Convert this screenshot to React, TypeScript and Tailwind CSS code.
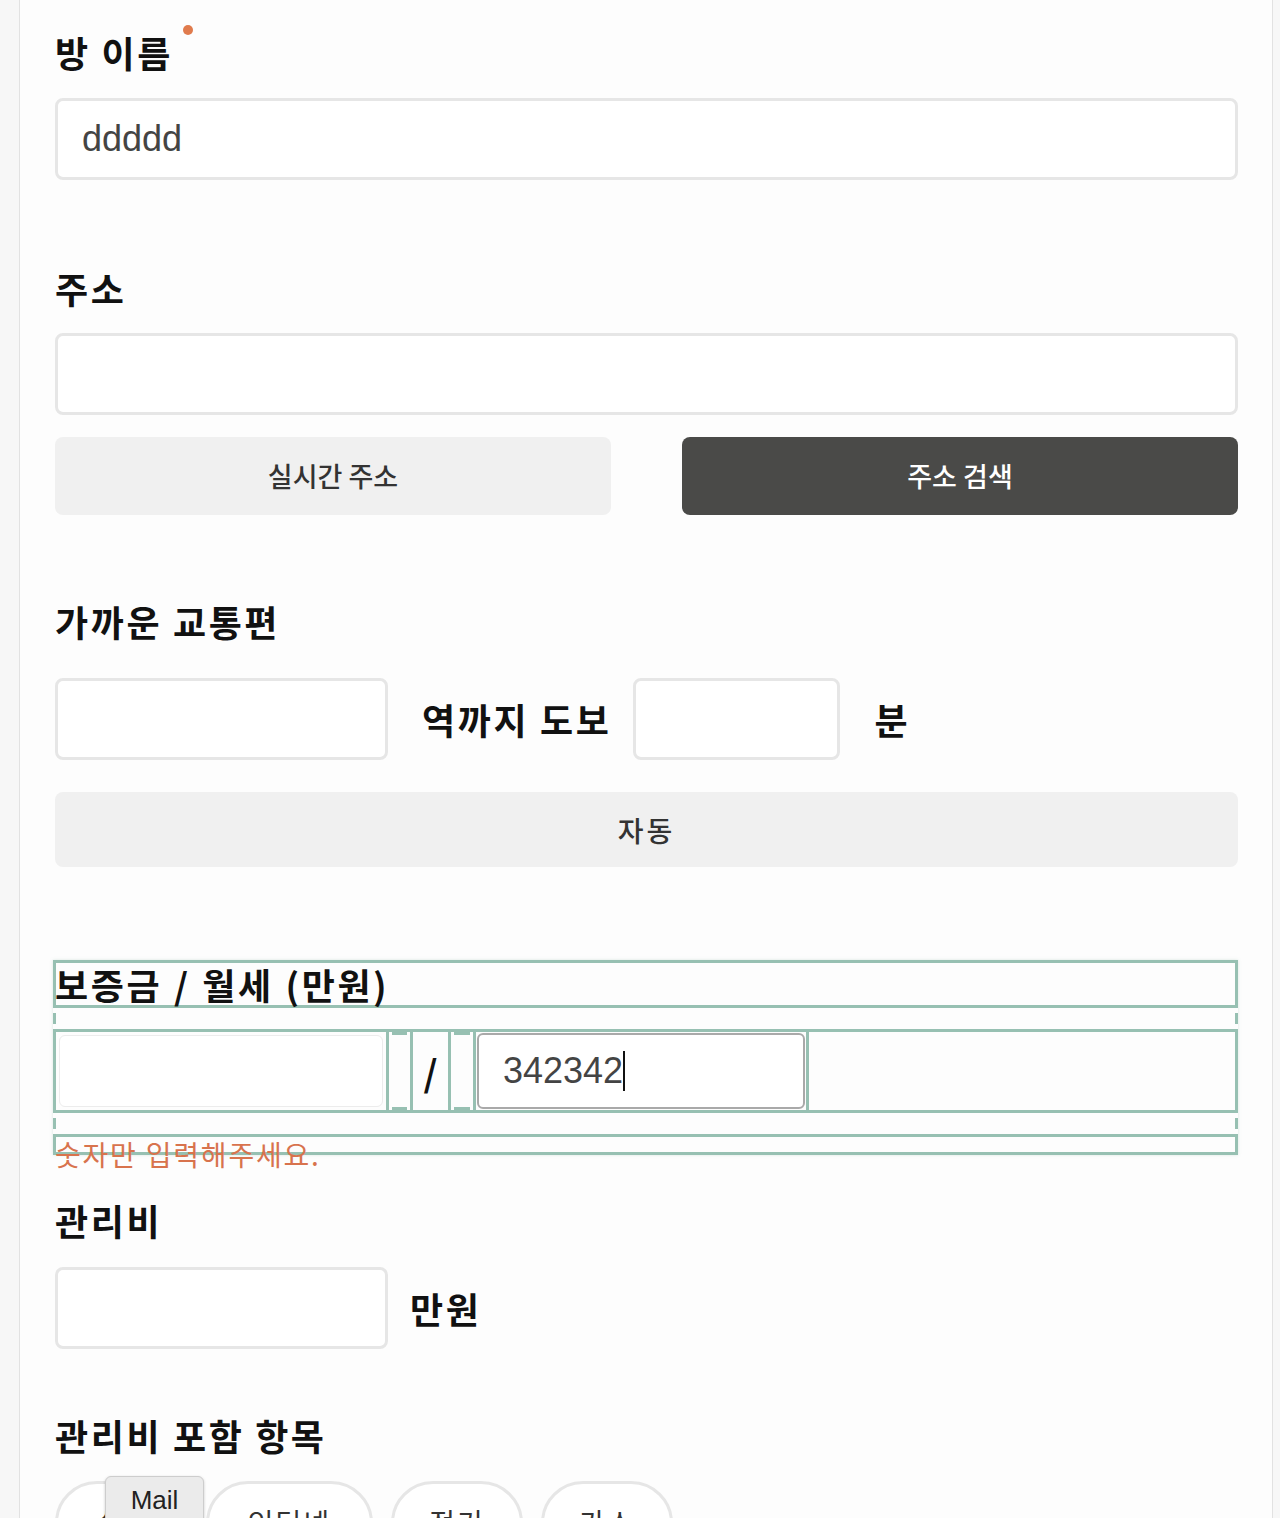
import React from "react";

const KR = "font-['Noto_Sans_CJK_KR',sans-serif]";
const LAT = "font-['Liberation_Sans','Noto_Sans_CJK_KR',sans-serif]";
const label = `${KR} font-bold text-[36px] leading-[40px] h-[40px] text-[#111] whitespace-nowrap tracking-[2.6px]`;
const input = "h-[82px] border-[3px] border-[#e6e6e6] rounded-[8px] bg-white";
const green = "border-[#97c0b2]";

function Tick() {
  return (
    <div className="h-[21px] py-[5px]">
      <div className={`h-full border-x-[3px] ${green}`} />
    </div>
  );
}

const chips: [string, string][] = [
  ["수도", "w-[133px]"],
  ["인터넷", "w-[167px]"],
  ["전기", "w-[132px]"],
  ["가스", "w-[132px]"],
];

export default function App() {
  return (
    <div className="w-[1280px] h-[1518px] overflow-hidden bg-[#f7f7f7] flex">
      <div className="ml-[19px] w-[1254px] h-full bg-[#fdfdfd] border-x border-[#e2e2e2] relative flex flex-col">
        <div className="h-[2px] w-full flex">
          <div className="w-[196px] bg-[#fff9cf]" />
          <div className="flex-1 bg-[#fffdf0]" />
        </div>
        <div className="pl-[35px] pr-[34px] flex flex-col">
          {/* 방 이름 */}
          <div className="mt-[32px] relative">
            <div className={label}>방 이름</div>
            <div className="absolute left-[128px] top-[-7px] w-[10px] h-[10px] rounded-full bg-[#e07b4d]" />
          </div>
          <div className={`${input} mt-[26px] flex items-center px-[24px]`}>
            <span className={`${LAT} text-[36px] text-[#444]`}>ddddd</span>
          </div>

          {/* 주소 */}
          <div className={`${label} mt-[88px]`}>주소</div>
          <div className={`${input} mt-[25px]`} />
          <div className="mt-[22px] flex gap-[71px]">
            <div className={`flex-1 h-[78px] rounded-[8px] bg-[#f0f0f0] flex items-center justify-center ${KR} text-[27px] font-medium text-[#333]`}>
              실시간 주소
            </div>
            <div className={`flex-1 h-[78px] rounded-[8px] bg-[#4a4a48] flex items-center justify-center ${KR} text-[27px] font-medium text-white`}>
              주소 검색
            </div>
          </div>

          {/* 가까운 교통편 */}
          <div className={`${label} mt-[86px]`}>가까운 교통편</div>
          <div className="mt-[37px] flex items-center">
            <div className={`${input} w-[333px]`} />
            <div className={`${label} ml-[34px] leading-[82px] h-[82px]`}>역까지 도보</div>
            <div className={`${input} w-[207px] ml-[22px]`} />
            <div className={`${label} ml-[34px] leading-[82px] h-[82px]`}>분</div>
          </div>
          <div className={`mt-[32px] h-[75px] rounded-[8px] bg-[#f0f0f0] flex items-center justify-center ${KR} text-[28px] tracking-[3px] font-medium text-[#333]`}>
            자동
          </div>

          {/* 보증금 / 월세 */}
          <div className="mt-[93px] -ml-[2px] shadow-[0_0_3px_rgba(151,192,178,0.35)]">
            <div className={`h-[48px] border-[3px] ${green} flex items-center`}>
              <span className={`${label} ml-[-1px] [word-spacing:1px]`}>보증금 / 월세 (만원)</span>
            </div>
            <Tick />
            <div className={`h-[84px] border-[3px] ${green} flex`}>
              <div className={`w-[333px] h-full border-r-[3px] ${green} p-[3px]`}>
                <div className="h-full rounded-[6px] border border-[#ececec] bg-white" />
              </div>
              <div className="w-[21px] h-full px-[3px]">
                <div className={`h-full border-y-[3px] ${green}`} />
              </div>
              <div className={`w-[41px] h-full border-x-[3px] ${green} flex items-center justify-center ${KR} font-bold text-[36px] leading-[78px] text-[#111]`}>
                /
              </div>
              <div className="w-[22px] h-full px-[3px]">
                <div className={`h-full border-y-[3px] ${green}`} />
              </div>
              <div className={`w-[336px] h-full border-x-[3px] ${green} p-[1px]`}>
                <div className="h-full rounded-[6px] border-2 border-[#a9a9a9] bg-white flex items-center pl-[24px]">
                  <span className={`${LAT} text-[36px] text-[#444] leading-none`}>342342</span>
                  <span className="w-[2px] h-[40px] bg-[#111]" />
                </div>
              </div>
              <div className="flex-1" />
            </div>
            <Tick />
            <div className={`h-[21px] border-[3px] ${green} relative`}>
              <span className={`absolute left-[-1px] top-[-3px] ${KR} text-[28px] leading-[40px] tracking-[1.8px] text-[#d8734d] whitespace-nowrap`}>
                숫자만 입력해주세요.
              </span>
            </div>
          </div>

          {/* 관리비 */}
          <div className={`${label} mt-[45px]`}>관리비</div>
          <div className="mt-[27px] flex items-center">
            <div className={`${input} w-[333px]`} />
            <div className={`${label} ml-[22px] leading-[82px] h-[82px]`}>만원</div>
          </div>

          {/* 관리비 포함 항목 */}
          <div className={`${label} mt-[66px]`}>관리비 포함 항목</div>
          <div className="mt-[26px] flex gap-[18px]">
            {chips.map(([t, w]) => (
              <div
                key={t}
                className={`${w} h-[84px] rounded-full border-[3px] border-[#e6e6e6] bg-white flex items-start justify-center pt-[18px] ${KR} text-[28px] leading-[40px] tracking-[2px] text-[#333] whitespace-nowrap`}
              >
                {t}
              </div>
            ))}
          </div>
        </div>

        {/* Mail tooltip */}
        <div className="absolute left-[85px] top-[1476px] w-[99px] h-[60px] bg-[#ebebeb] border border-[#cdcdcd] rounded-[6px] shadow-[0_1px_3px_rgba(0,0,0,0.2)] flex justify-center pt-[6px]">
          <span className={`${LAT} text-[26px] leading-[34px] text-[#222]`}>Mail</span>
        </div>
      </div>
    </div>
  );
}
